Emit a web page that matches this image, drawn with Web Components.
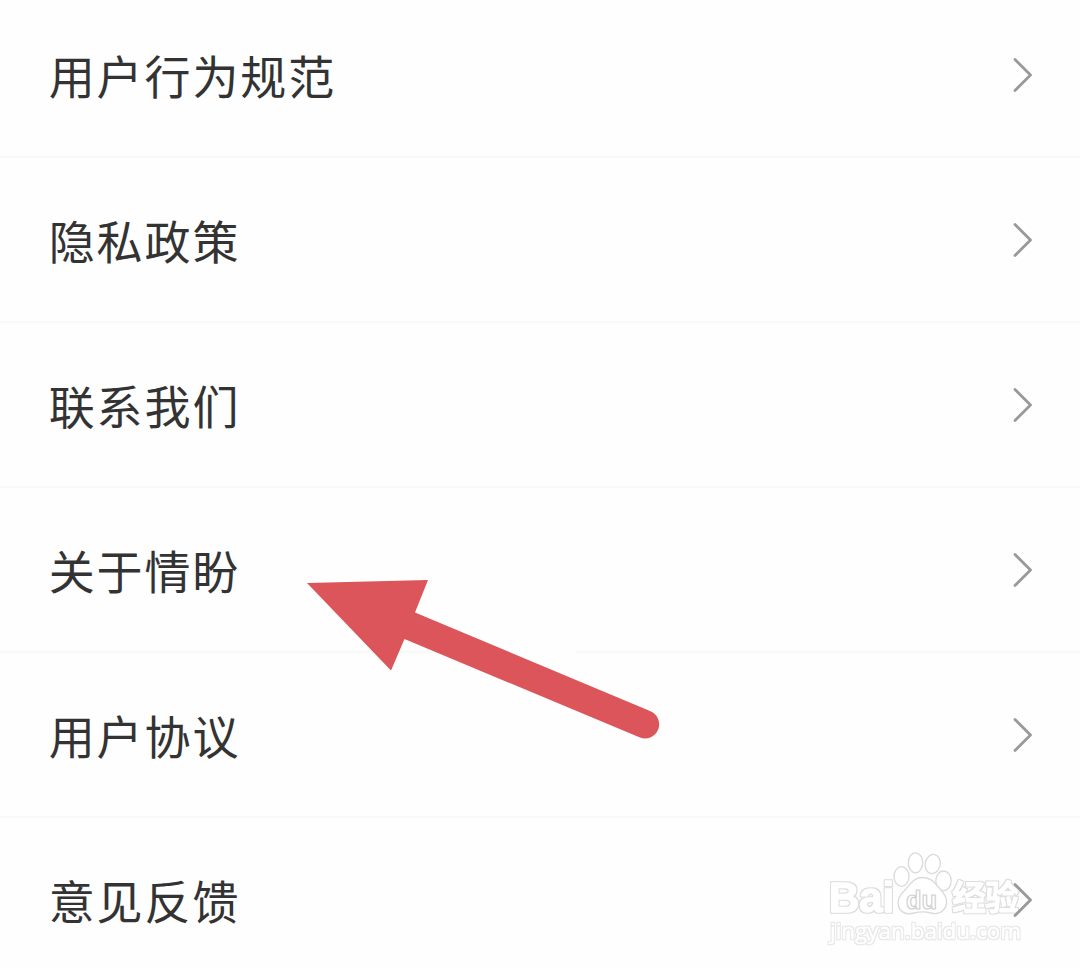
<!DOCTYPE html>
<html lang="zh-CN">
<head>
<meta charset="utf-8">
<title>设置</title>
<style>
html,body{margin:0;background:#fefefe}
body{width:1080px;height:968px;overflow:hidden}
</style>
</head>
<body>
<settings-page>
<settings-row>用户行为规范</settings-row>
<settings-row>隐私政策</settings-row>
<settings-row>联系我们</settings-row>
<settings-row>关于情盼</settings-row>
<settings-row>用户协议</settings-row>
<settings-row>意见反馈</settings-row>
<pointer-arrow slot="overlay"></pointer-arrow>
<site-watermark slot="overlay"></site-watermark>
</settings-page>
<script>
const define = (name, html) => customElements.define(name, class extends HTMLElement {
  constructor() {
    super();
    this.attachShadow({ mode: 'open' }).innerHTML = html;
  }
});

define('settings-page', `
<style>
:host{display:block;position:relative;height:968px;overflow:hidden;background:#fefefe;color:#333;font-family:"Noto Sans CJK SC",sans-serif}
.list{display:flex;flex-direction:column;margin-top:-7px}
</style>
<div class="list"><slot></slot></div>
<slot name="overlay"></slot>`);

define('settings-row', `
<style>
:host{display:flex;align-items:center;justify-content:space-between;box-sizing:border-box;height:165px;padding:0 46px 0 48.7px;border-bottom:2px solid #f9f9f9}
.label{font-size:46px;letter-spacing:1.9px;line-height:68px;padding-bottom:2px}
svg{display:block;position:relative;z-index:2;padding-top:1px}
</style>
<span class="label"><slot></slot></span>
<svg width="22" height="38" viewBox="0 0 22 38" fill="none" stroke="#999" stroke-width="2.8" stroke-linecap="round" stroke-linejoin="round"><path d="M3 3.5L18.5 19L3 34.5"/></svg>`);

define('pointer-arrow', `
<style>:host{display:block;position:absolute;left:300px;top:570px}svg{display:block}</style>
<svg width="370" height="180" viewBox="300 570 370 180" fill="#db555a"><path fill="#fefefe" d="M500 648H576V656H500Z"/><path d="M307 583L428 580L415 612.5L650 711A14 14 0 0 1 640 737.5L404.500 639L391 670.500Z"/></svg>`);

define('site-watermark', `
<style>:host{display:block;position:absolute;left:820px;top:846px;z-index:1}svg{display:block}text{stroke-linejoin:round}</style>
<svg width="220" height="104" viewBox="820 846 220 104" fill="#fff" stroke="#dadada" stroke-width="1.3">
<defs>
<filter id="edge" x="-5%" y="-15%" width="110%" height="130%" color-interpolation-filters="sRGB">
<feMorphology in="SourceAlpha" operator="dilate" radius="1" result="wide"/>
<feFlood flood-color="#dcdcdc"/><feComposite in2="wide" operator="in" result="rim"/>
<feMerge><feMergeNode in="rim"/><feMergeNode in="SourceGraphic"/></feMerge>
</filter>
<filter id="faint" x="-5%" y="-15%" width="110%" height="130%" color-interpolation-filters="sRGB">
<feMorphology in="SourceAlpha" operator="dilate" radius="1" result="wide"/>
<feFlood flood-color="#e6e6e6"/><feComposite in2="wide" operator="in" result="rim"/>
<feMerge><feMergeNode in="rim"/><feMergeNode in="SourceGraphic"/></feMerge>
</filter>
</defs>
<ellipse cx="901.500" cy="876.500" rx="7.500" ry="9.800"/>
<ellipse cx="915.500" cy="862.800" rx="7.200" ry="10"/>
<ellipse cx="932.700" cy="864" rx="7.500" ry="9.700" transform="rotate(12 932.7 864)"/>
<ellipse cx="943.500" cy="880.800" rx="7.700" ry="9.800"/>
<path d="M922.500 877.500C913 877.500 911 884 904 891C899 896 897 901 898.500 906C901 914 908 914.500 914 913C920 911.500 925 911.500 931 913C939 915 945 911 946.500 904C947.500 898 944 893 940 889C934 882 931 877.500 922.500 877.500Z"/>
<g stroke="#fff" filter="url(#edge)">
<text x="829" y="912" font-family="Liberation Sans,Arial,sans-serif" font-weight="700" font-size="43" stroke-width="1.5" textLength="65" lengthAdjust="spacingAndGlyphs">Bai</text>
<text x="952" y="910" font-family="Noto Sans CJK SC,sans-serif" font-weight="700" font-size="34" stroke-width=".8" textLength="67">经验</text>
</g>
<text x="906" y="908.500" font-family="Liberation Sans,Arial,sans-serif" font-weight="700" font-size="26" stroke="#d0d0d0" stroke-width="1.2" textLength="31" lengthAdjust="spacingAndGlyphs">du</text>
<text x="830" y="938.500" font-family="Open Sans,sans-serif" font-size="22" stroke="#fff" stroke-width=".4" filter="url(#faint)" textLength="191" lengthAdjust="spacingAndGlyphs">jingyan.baidu.com</text>
</svg>`);
</script>
</body>
</html>
